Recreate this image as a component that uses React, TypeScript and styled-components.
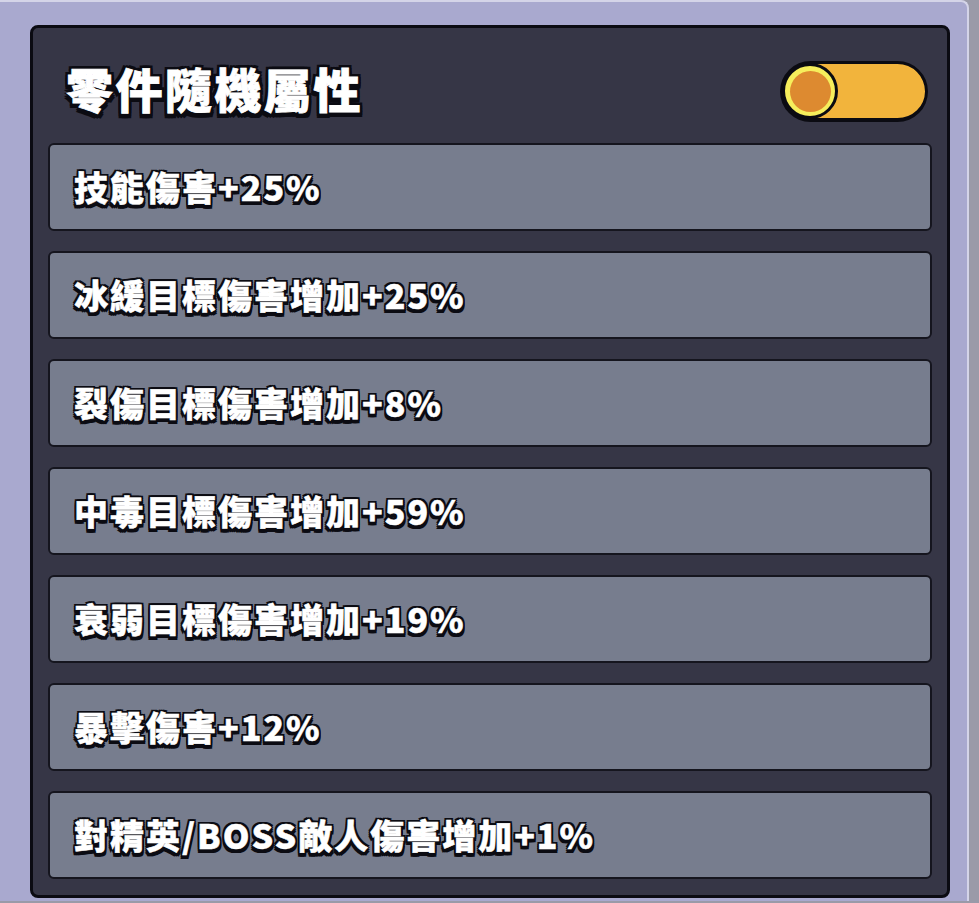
import styled, {createGlobalStyle} from 'styled-components'

const stats = [
    '技能傷害+25%',
    '冰緩目標傷害增加+25%',
    '裂傷目標傷害增加+8%',
    '中毒目標傷害增加+59%',
    '衰弱目標傷害增加+19%',
    '暴擊傷害+12%',
    '對精英/BOSS敵人傷害增加+1%',
];

const outline = (w: number, drop: number) => `
    ${w}px 0 0 #0b0b12, -${w}px 0 0 #0b0b12, 0 ${w}px 0 #0b0b12, 0 -${w}px 0 #0b0b12,
    ${w}px ${w}px 0 #0b0b12, -${w}px ${w}px 0 #0b0b12, ${w}px -${w}px 0 #0b0b12, -${w}px -${w}px 0 #0b0b12,
    0 ${drop}px 0 #0b0b12, ${w}px ${drop}px 0 #0b0b12, -${w}px ${drop}px 0 #0b0b12
`;

const GlobalStyle = createGlobalStyle`
    html, body {
        margin: 0;
        padding: 0;
        background: #9a9aa8;
    }
    body {
        font-family: "Noto Sans CJK TC", "Noto Sans", sans-serif;
    }
`;

const Frame = styled.div`
    width: 969px;
    height: 901px;
    background: #a9a9cf;
    border-top: 2px solid #d4d4e8;
    border-right: 2px solid #d4d4e8;
    border-top-right-radius: 8px;
    padding: 23px 0 0 30px;
    box-sizing: border-box;
`;

const Panel = styled.div`
    width: 920px;
    height: 873px;
    box-sizing: border-box;
    background: #363646;
    border: 3px solid #0b0b12;
    border-radius: 8px;
    padding: 0 15px 16px 15px;
    display: flex;
    flex-direction: column;
`;

const Header = styled.header`
    height: 115px;
    box-sizing: border-box;
    display: flex;
    align-items: center;
    justify-content: space-between;
    padding: 12px 4px 0 18px;
`;

const Title = styled.h1`
    margin: 0;
    color: #fff;
    font-size: 47px;
    font-weight: 900;
    letter-spacing: 2.5px;
    line-height: 1;
    -webkit-text-stroke: 0.8px #fff;
    text-shadow: ${outline(3, 5)};
    margin-top: -8px;
`;

const Toggle = styled.div`
    width: 148px;
    height: 61px;
    box-sizing: border-box;
    border: 3px solid #0b0b12;
    border-bottom-width: 4px;
    border-radius: 31px;
    background: #f2b43c;
    display: flex;
    align-items: center;
`;

const Knob = styled.div`
    width: 56px;
    height: 56px;
    box-sizing: border-box;
    border-radius: 50%;
    border: 3px solid #0b0b12;
    background: #f6ee5c;
    display: flex;
    align-items: center;
    justify-content: center;
    margin-left: -1px;
`;

const KnobCore = styled.div`
    width: 41px;
    height: 41px;
    border-radius: 50%;
    background: #dd8a30;
`;

const StatList = styled.ul`
    list-style: none;
    margin: 0;
    padding: 0;
    display: flex;
    flex-direction: column;
    gap: 20px;
`;

const Stat = styled.li`
    height: 88px;
    box-sizing: border-box;
    background: #777d8e;
    border: 2px solid #15151e;
    border-radius: 6px;
    display: flex;
    align-items: center;
    padding-left: 24px;
    padding-bottom: 2px;
    color: #fff;
    font-size: 34px;
    font-weight: 900;
    letter-spacing: 2px;
    -webkit-text-stroke: 0.5px #fff;
    text-shadow: ${outline(2, 4)};
`;

export default function App() {
    return (
        <>
            <GlobalStyle />
            <Frame>
                <Panel>
                    <Header>
                        <Title>零件隨機屬性</Title>
                        <Toggle>
                            <Knob><KnobCore /></Knob>
                        </Toggle>
                    </Header>
                    <StatList>
                        {stats.map(s => <Stat key={s}>{s}</Stat>)}
                    </StatList>
                </Panel>
            </Frame>
        </>
    )
}
